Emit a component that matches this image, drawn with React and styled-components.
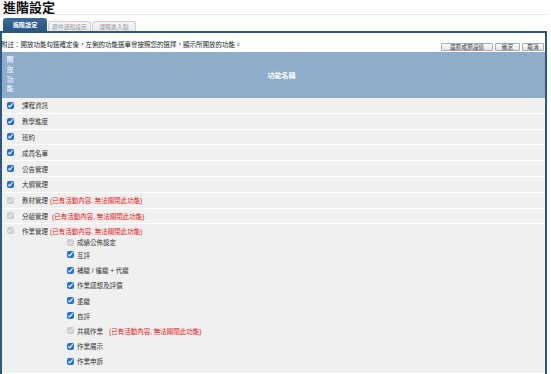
import React from "react";
import styled, { createGlobalStyle } from "styled-components";

const Global = createGlobalStyle`
  html, body { margin: 0; padding: 0; background: #fff; }
  body {
    font-family: "Liberation Sans", "Noto Sans CJK TC", sans-serif;
    color: #222;
  }
`;

const Page = styled.div`
  width: 547px;
`;

const Title = styled.h1`
  margin: 0;
  padding: 1px 0 0 3px;
  box-sizing: border-box;
  height: 15px;
  font-size: 13px;
  line-height: 13px;
  font-weight: bold;
  color: #111;
  border-bottom: 1px solid #e6e6e6;
`;

const Tabs = styled.div`
  display: flex;
  align-items: flex-end;
  gap: 1px;
  padding: 3px 0 0 3px;
`;

const Tab = styled.div`
  display: flex;
  align-items: center;
  justify-content: center;
  box-sizing: border-box;
  width: ${(p) => p.$w}px;
  height: ${(p) => (p.$active ? 13 : 10)}px;
  font-size: ${(p) => (p.$active ? 6.2 : 5.8)}px;
  font-weight: ${(p) => (p.$active ? "bold" : "normal")};
  color: ${(p) => (p.$active ? "#fff" : "#9a9a9a")};
  background: ${(p) =>
    p.$active ? "linear-gradient(#3a6a98, #285683)" : "linear-gradient(#f7f7f7, #e9e9e9)"};
  border: ${(p) => (p.$active ? "none" : "1px solid #cfcfcf")};
  border-bottom: none;
  border-radius: 3px 3px 0 0;
`;

const Panel = styled.div`
  box-sizing: border-box;
  width: 547px;
  border-top: 2px solid #2b5884;
  border-left: 2px solid #2b5884;
  border-right: 2px solid #2b5884;
`;

const NoteBar = styled.div`
  display: flex;
  justify-content: space-between;
  align-items: flex-end;
  height: 19px;
  padding: 0 1px 1px 0;
  box-sizing: border-box;
  background: #fff;
`;

const Note = styled.span`
  font-size: 6.5px;
  line-height: 8px;
  margin: 0 0 2px -1px;
  color: #222;
`;

const Buttons = styled.div`
  display: flex;
  gap: 2px;
`;

const Button = styled.button`
  box-sizing: border-box;
  width: ${(p) => p.$w}px;
  height: 8px;
  padding: 0;
  font-family: inherit;
  font-size: 5.7px;
  line-height: 6px;
  color: #333;
  background: linear-gradient(#ffffff, #e4e4e4);
  border: 1px solid #a9a9a9;
  border-radius: 1px;
`;

const Header = styled.div`
  display: grid;
  grid-template-columns: 16px 1fr;
  height: 46px;
  background: #8eadcb;
  color: #fff;
`;

const VerticalHead = styled.div`
  display: flex;
  flex-direction: column;
  align-items: center;
  padding-top: 3px;
  font-size: 7px;
  line-height: 9.8px;
`;

const NameHead = styled.div`
  display: flex;
  align-items: center;
  justify-content: center;
  font-size: 7px;
  font-weight: bold;
`;

const Row = styled.div`
  background: #f0f0f0;
  border-bottom: 1px solid #fff;
`;

const Line = styled.label`
  display: flex;
  align-items: center;
  height: ${(p) => p.$h || 14.8}px;
  padding-left: ${(p) => p.$indent || 5}px;
  gap: ${(p) => p.$gap || 8}px;
  font-size: 6.5px;
  color: #333;
  white-space: pre;
`;

const SubList = styled.div`
  padding-bottom: 4px;
`;

const Check = styled.input.attrs({ type: "checkbox", readOnly: true })`
  width: 7px;
  height: 7px;
  margin: 0;
  accent-color: #1e6fe0;
  flex: none;
`;

const Warn = styled.span`
  color: #e81010;
  margin-left: ${(p) => p.$ml || 2}px;
`;

const WARN = "(已有活動內容, 無法關閉此功能)";

const mains = [
  { name: "課程資訊" },
  { name: "教學進度" },
  { name: "班約" },
  { name: "成員名單" },
  { name: "公告管理" },
  { name: "大綱管理" },
  { name: "教材管理", locked: true },
  { name: "分組管理", locked: true, ml: 4 },
];

const subs = [
  { name: "互評" },
  { name: "補繳 / 催繳 + 代繳" },
  { name: "作業感想及評價" },
  { name: "重繳" },
  { name: "自評" },
  { name: "共構作業", locked: true },
  { name: "作業展示" },
  { name: "作業申訴" },
];

export default function App() {
  return (
    <Page>
      <Global />
      <Title>進階設定</Title>
      <Tabs>
        <Tab $active $w={44}>進階設定</Tab>
        <Tab $w={43}>郵件通知設定</Tab>
        <Tab $w={44}>課程進入點</Tab>
      </Tabs>
      <Panel>
        <NoteBar>
          <Note>附註：開放功能勾選確定後，左側的功能選單會按照您的選擇，顯示所開放的功能。</Note>
          <Buttons>
            <Button $w={52}>還原成預設值</Button>
            <Button $w={25}>確定</Button>
            <Button $w={22}>取消</Button>
          </Buttons>
        </NoteBar>
        <Header>
          <VerticalHead>
            <span>開</span>
            <span>放</span>
            <span>功</span>
            <span>能</span>
          </VerticalHead>
          <NameHead>功能名稱</NameHead>
        </Header>
        {mains.map((m) => (
          <Row key={m.name}>
            <Line>
              <Check defaultChecked disabled={!!m.locked} />
              <span>
                {m.name}
                {m.locked && <Warn $ml={m.ml}>{WARN}</Warn>}
              </span>
            </Line>
          </Row>
        ))}
        <Row>
          <Line $h={13}>
            <Check defaultChecked disabled />
            <span>
              作業管理<Warn>{WARN}</Warn>
            </span>
          </Line>
          <SubList>
            <Line $h={10} $indent={65} $gap={3}>
              <Check defaultChecked disabled />
              <span>成績公佈設定</span>
            </Line>
            {subs.map((s) => (
              <Line key={s.name} $h={15.2} $indent={65} $gap={3}>
                <Check defaultChecked disabled={!!s.locked} />
                <span>
                  {s.name}
                  {s.locked && <Warn $ml={6}>{WARN}</Warn>}
                </span>
              </Line>
            ))}
          </SubList>
        </Row>
      </Panel>
    </Page>
  );
}
